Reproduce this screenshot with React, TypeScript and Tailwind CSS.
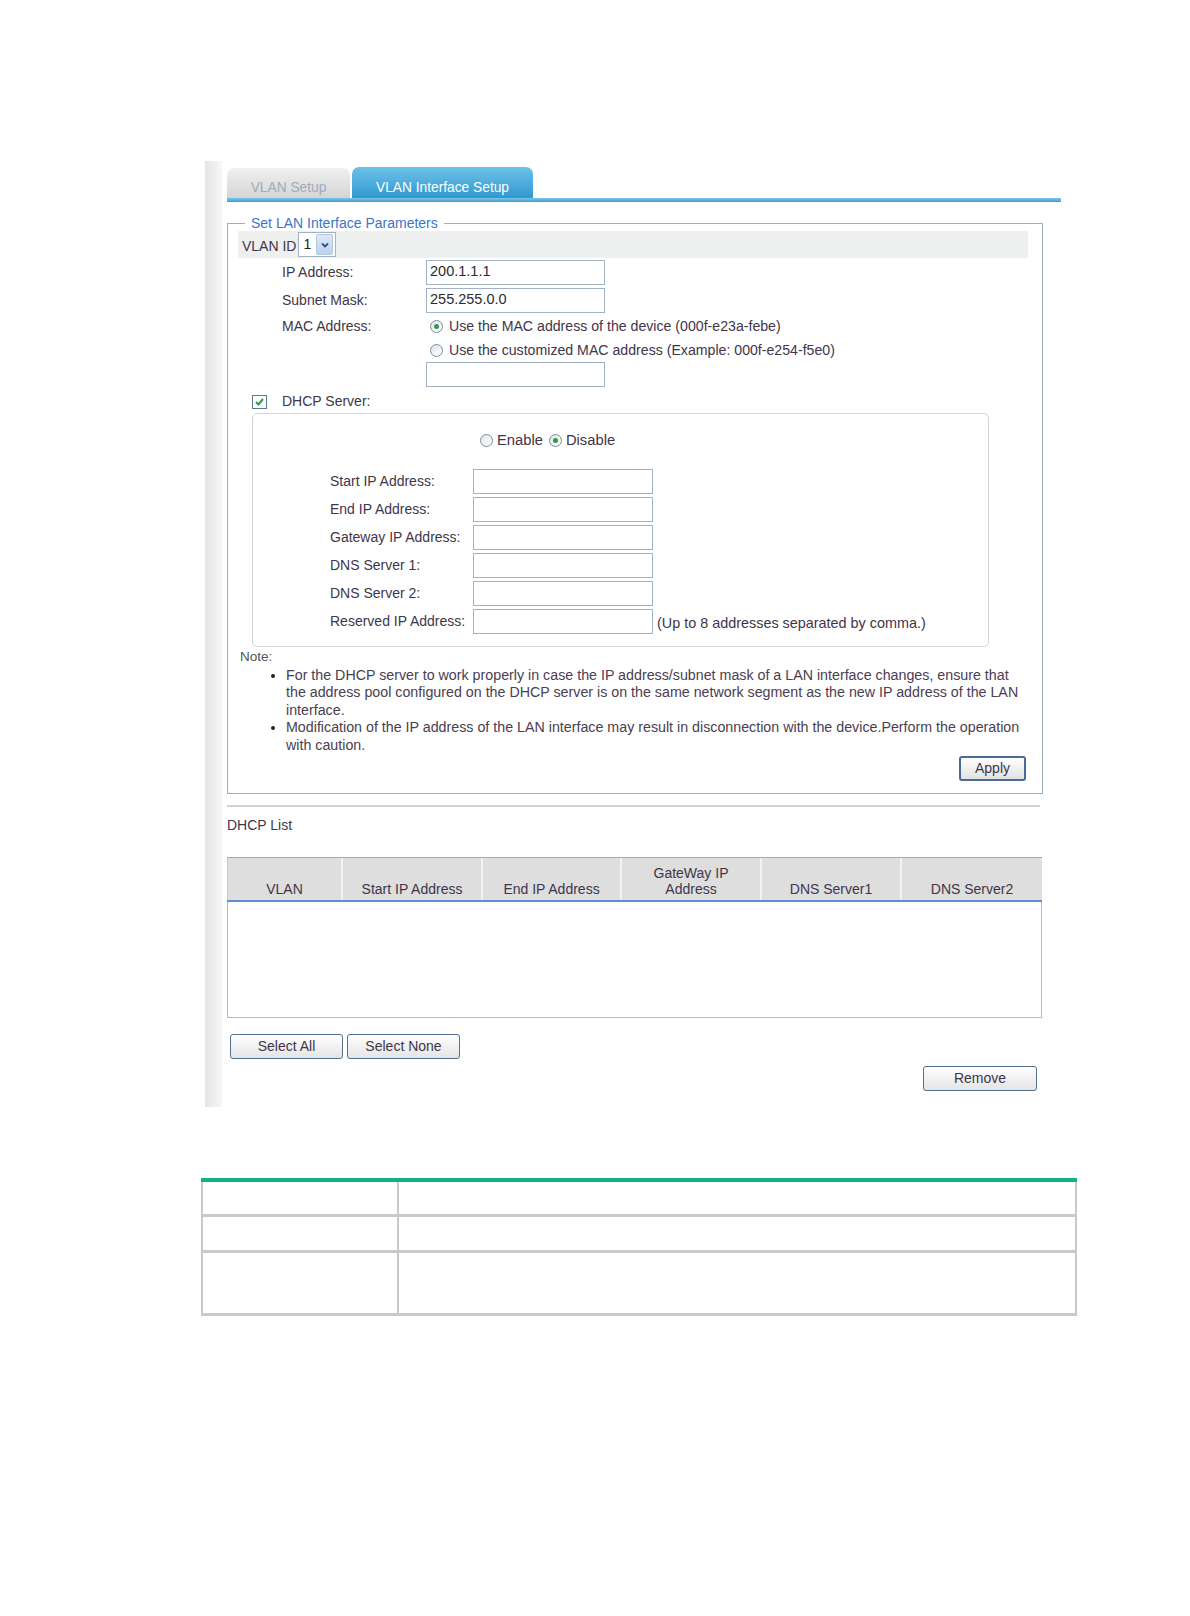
import React from 'react';

const txt = 'text-[#40364a]';

function Radio({ checked }: { checked?: boolean }) {
    return (
        <span className="inline-flex h-[13px] w-[13px] shrink-0 items-center justify-center rounded-full border border-[#7d8c9c] bg-gradient-to-br from-[#dfe4ea] to-white">
            {checked && <span className="h-[5px] w-[5px] rounded-full bg-[#2f9a48]" />}
        </span>
    );
}

function Input({ value, w = 'w-[179px]' }: { value?: string; w?: string }) {
    return (
        <div
            className={`${w} flex h-[25px] items-center border border-[#a3b3c6] bg-white pl-[3px] text-[14.5px] text-[#2c2c2c]`}
        >
            {value}
        </div>
    );
}

function Btn({ label, w }: { label: string; w: string }) {
    return (
        <button
            className={`${w} h-[25px] rounded-[3px] border border-[#52708f] bg-gradient-to-b from-white to-[#e4e4e4] text-[14px] ${txt}`}
        >
            {label}
        </button>
    );
}

function FormRow({
    label,
    h,
    children,
}: {
    label?: string;
    h: string;
    children?: React.ReactNode;
}) {
    return (
        <div className={`flex ${h} items-center pl-[44px]`}>
            <div className={`w-[144px] text-[14px] ${txt}`}>{label}</div>
            {children}
        </div>
    );
}

function DhcpRow({ label, extra }: { label: string; extra?: string }) {
    return (
        <div className="flex h-[28px] items-center pl-[77px]">
            <div className={`w-[143px] text-[14px] ${txt}`}>{label}</div>
            <Input w="w-[180px]" />
            {extra && <span className={`ml-[4px] pt-[5px] text-[14.4px] ${txt}`}>{extra}</span>}
        </div>
    );
}

const heads = [
    { w: 'w-[116px]', t: ['VLAN'] },
    { w: 'w-[140px]', t: ['Start IP Address'] },
    { w: 'w-[139px]', t: ['End IP Address'] },
    { w: 'w-[140px]', t: ['GateWay IP', 'Address'] },
    { w: 'w-[140px]', t: ['DNS Server1'] },
    { w: 'w-[140px]', t: ['DNS Server2'] },
];

export default function App() {
    return (
        <div className="min-h-[1616px] bg-white pt-[161px] font-['Liberation_Sans',Arial,sans-serif]">
            <div className="flex pl-[205px]">
                <div className="w-[17px] bg-gradient-to-r from-[#e4e4e4] to-[#f7f7f7]" />
                <div className="ml-[5px] w-[834px] pt-[6px] pb-[16px]">
                    {/* tabs */}
                    <div className="flex h-[31px] items-end gap-[2px]">
                        <div className="flex h-[30px] w-[123px] items-center justify-center rounded-t-[7px] bg-gradient-to-b from-[#f0f0f0] to-[#d5d5d5] pt-[10px] text-[13.75px] text-[#9eacbb]">
                            VLAN Setup
                        </div>
                        <div className="flex h-[31px] w-[181px] items-center justify-center rounded-t-[7px] bg-gradient-to-b from-[#6cc2e8] to-[#2f98d0] pt-[11px] text-[13.75px] text-white">
                            VLAN Interface Setup
                        </div>
                    </div>
                    <div className="h-[4px] bg-gradient-to-b from-[#7cc6e8] to-[#3a9ed2]" />

                    {/* parameters */}
                    <fieldset className="mt-[13px] w-[816px] border border-[#94aec4] pr-[14px] pl-[10px] pb-[12px]">
                        <legend className="ml-[7px] px-[6px] text-[14px] leading-[16px] text-[#3d74c9]">
                            Set LAN Interface Parameters
                        </legend>
                        <div className="flex h-[27px] items-center gap-[2px] bg-[#eef0ef] pl-[4px]">
                            <span className={`pt-[4px] text-[14px] ${txt}`}>VLAN ID</span>
                            <div className="flex h-[25px] w-[38px] items-center border border-[#a3b3c6] bg-white">
                                <span className="w-[17px] pl-[4px] text-[14px] text-[#222]">1</span>
                                <span className="flex h-[21px] w-[17px] items-center justify-center rounded-[2px] border border-[#b4c8e2] bg-gradient-to-b from-[#dde9f7] to-[#bcd2ee]">
                                    <svg width="10" height="8" viewBox="0 0 10 8">
                                        <path d="M2 2.5 L5 5.5 L8 2.5" fill="none" stroke="#2b4f8f" strokeWidth="1.8" />
                                    </svg>
                                </span>
                            </div>
                        </div>
                        <FormRow label="IP Address:" h="h-[28px]">
                            <Input value="200.1.1.1" />
                        </FormRow>
                        <FormRow label="Subnet Mask:" h="h-[28px]">
                            <Input value="255.255.0.0" />
                        </FormRow>
                        <FormRow label="MAC Address:" h="h-[24px]">
                            <div className={`flex items-center gap-[6px] pt-[1px] pl-[4px] text-[14.15px] ${txt}`}>
                                <Radio checked />
                                <span>Use the MAC address of the device (000f-e23a-febe)</span>
                            </div>
                        </FormRow>
                        <FormRow h="h-[24px]">
                            <div className={`flex items-center gap-[6px] pt-[1px] pl-[4px] text-[14.15px] ${txt}`}>
                                <Radio />
                                <span>Use the customized MAC address (Example: 000f-e254-f5e0)</span>
                            </div>
                        </FormRow>
                        <FormRow h="h-[24px]">
                            <Input />
                        </FormRow>
                        <div className="flex h-[27px] items-center pt-[4px] pl-[14px]">
                            <span className="flex h-[14px] w-[15px] items-center justify-center border border-[#5a7a9a] bg-white">
                                <svg width="11" height="10" viewBox="0 0 11 10">
                                    <path d="M2 5 L4.5 7.5 L9 2" fill="none" stroke="#2f9a48" strokeWidth="2" />
                                </svg>
                            </span>
                            <span className={`ml-[15px] text-[14px] ${txt}`}>DHCP Server:</span>
                        </div>

                        {/* dhcp server box */}
                        <div className="ml-[14px] w-[737px] rounded-[5px] border border-[#d4d4d4] pt-[16px] pb-[11px]">
                            <div className={`flex h-[20px] items-center pl-[227px] text-[14.75px] ${txt}`}>
                                <Radio />
                                <span className="mr-[6px] ml-[4px]">Enable</span>
                                <Radio checked />
                                <span className="ml-[4px]">Disable</span>
                            </div>
                            <div className="mt-[17px]">
                                <DhcpRow label="Start IP Address:" />
                                <DhcpRow label="End IP Address:" />
                                <DhcpRow label="Gateway IP Address:" />
                                <DhcpRow label="DNS Server 1:" />
                                <DhcpRow label="DNS Server 2:" />
                                <DhcpRow
                                    label="Reserved IP Address:"
                                    extra="(Up to 8 addresses separated by comma.)"
                                />
                            </div>
                        </div>

                        {/* note */}
                        <div className="pl-[2px] text-[14.25px] leading-[17.6px] text-[#4a4050]">
                            <div className="pt-[1px] text-[13.5px] text-[#555]">Note:</div>
                            <ul className="mt-[1px] pl-[31px]">
                                <li className="flex">
                                    <span className="w-[15px] pt-[7px]">
                                        <span className="block h-[4px] w-[4px] rounded-full bg-[#222]" />
                                    </span>
                                    <span className="whitespace-nowrap">
                                        For the DHCP server to work properly in case the IP address/subnet mask of a LAN
                                        interface changes, ensure that
                                        <br />
                                        the address pool configured on the DHCP server is on the same network segment as
                                        the new IP address of the LAN
                                        <br />
                                        interface.
                                    </span>
                                </li>
                                <li className="flex">
                                    <span className="w-[15px] pt-[7px]">
                                        <span className="block h-[4px] w-[4px] rounded-full bg-[#222]" />
                                    </span>
                                    <span className="whitespace-nowrap">
                                        Modification of the IP address of the LAN interface may result in disconnection
                                        with the device.Perform the operation
                                        <br />
                                        with caution.
                                    </span>
                                </li>
                            </ul>
                        </div>
                        <div className="mt-[1px] flex justify-end pr-[2px]">
                            <button
                                className={`h-[25px] w-[67px] rounded-[3px] border-2 border-[#4a6a9a] bg-gradient-to-b from-white to-[#e2e2e2] text-[14px] ${txt}`}
                            >
                                Apply
                            </button>
                        </div>
                    </fieldset>

                    <div className="mt-[11px] h-[2px] w-[813px] bg-[#d2d2d2]" />
                    <div className={`mt-[10px] text-[14px] leading-[16px] ${txt}`}>DHCP List</div>

                    {/* list table */}
                    <div className="mt-[24px] w-[815px]">
                        <div className="flex h-[45px] border-t border-b-2 border-t-[#a9a3cc] border-b-[#5a8fd6] bg-[#dedede]">
                            {heads.map((h, i) => (
                                <div
                                    key={h.t[0]}
                                    className={`${h.w} flex flex-col items-center justify-end pb-[3px] text-center text-[14px] leading-[16px] ${txt} ${
                                        i < heads.length - 1 ? 'border-r-2 border-r-[#f2f2f2]' : ''
                                    } ${i === 0 ? 'border-l border-l-[#c8c8c8]' : ''}`}
                                >
                                    {h.t.map((l) => (
                                        <span key={l}>{l}</span>
                                    ))}
                                </div>
                            ))}
                        </div>
                        <div className="h-[116px] border-x border-b border-[#8cc8e4]" />
                    </div>

                    <div className="mt-[16px] flex gap-[4px] pl-[3px]">
                        <Btn label="Select All" w="w-[113px]" />
                        <Btn label="Select None" w="w-[113px]" />
                    </div>
                    <div className="mt-[7px] flex justify-end pr-[24px]">
                        <Btn label="Remove" w="w-[114px]" />
                    </div>
                </div>
            </div>

            {/* bottom table */}
            <div className="mt-[71px] ml-[201px] w-[876px] border-t-4 border-[#12b08a]">
                {['h-[35px]', 'h-[36px]', 'h-[63px]'].map((h) => (
                    <div key={h} className={`grid ${h} grid-cols-[196px_1fr] border-x-2 border-b-[3px] border-[#c9c9c9]`}>
                        <div className="border-r-2 border-[#c9c9c9]" />
                        <div />
                    </div>
                ))}
            </div>
        </div>
    );
}
